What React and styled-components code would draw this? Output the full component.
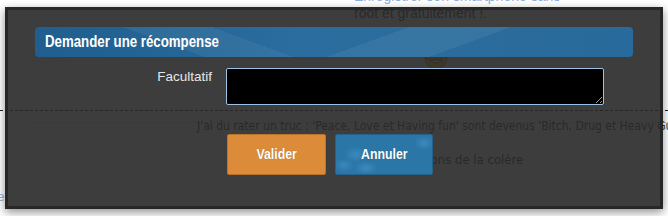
import React from 'react';
import styled, { createGlobalStyle } from 'styled-components';

const GlobalStyle = createGlobalStyle`
  html, body {
    margin: 0;
    padding: 0;
    background: #ffffff;
    overflow: hidden;
  }
  #root {
    height: 216px;
  }
`;

const Page = styled.div`
  position: relative;
  width: 668px;
  height: 216px;
  overflow: hidden;
  font-family: 'Liberation Sans', Arial, sans-serif;
  color: #333;
`;

const Blurb = styled.div`
  margin: -12px 0 0 354px;
  font-size: 14px;
  line-height: 17px;
`;

const BlurbLink = styled.div`
  color: #8fb0dc;
`;

const Smiley = styled.svg`
  display: block;
  margin: 24px 0 0 424px;
`;

const Rule = styled.div`
  margin: ${(p) => p.$top}px 0 0 ${(p) => p.$left}px;
  border-top: ${(p) => p.$size}px ${(p) => p.$kind} ${(p) => p.$color};
`;

const Quote = styled.div`
  margin: -4px 0 0 197px;
  white-space: nowrap;
  font-family: 'DejaVu Sans Condensed', 'DejaVu Sans', sans-serif;
  font-size: 12px;
  line-height: 15px;
`;

const Reason = styled.div`
  margin: 18px 0 0 386px;
  white-space: nowrap;
  font-family: 'DejaVu Sans Condensed', 'DejaVu Sans', sans-serif;
  font-size: 13px;
  line-height: 16px;
`;

const SideLink = styled.div`
  margin: 21px 0 0 -41px;
  font-size: 13px;
  color: #8fb0dc;
`;

const Modal = styled.div`
  position: absolute;
  left: 5px;
  top: 7px;
  width: 598px;
  height: 179px;
  border: 3px solid rgba(38, 38, 38, 0.97);
  background: rgba(40, 40, 40, 0.9);
  box-shadow: 0 3px 9px rgba(0, 0, 0, 0.45);
  padding: 17px 27px 0 27px;
  display: flex;
  flex-direction: column;
  font-family: 'Liberation Sans', Arial, sans-serif;
`;

const TitleBar = styled.div`
  height: 30px;
  border-radius: 4px;
  display: flex;
  align-items: center;
  padding: 0 10px;
  background:
    linear-gradient(200deg, transparent 62%, rgba(255, 255, 255, 0.05) 62%, rgba(255, 255, 255, 0.05) 75%, transparent 75%),
    linear-gradient(160deg, transparent 55%, rgba(255, 255, 255, 0.06) 55%, rgba(255, 255, 255, 0.06) 70%, transparent 70%),
    linear-gradient(to right, #1f5e8f, #2a6d9e 45%, #2b6c9c 70%, #286a9b);
`;

const Title = styled.h2`
  margin: 0;
  font-family: 'Liberation Sans', Arial, sans-serif;
  font-weight: bold;
  font-size: 17px;
  color: #ffffff;
  white-space: nowrap;
  transform: scaleX(0.78);
  transform-origin: left center;
`;

const FieldRow = styled.div`
  display: grid;
  grid-template-columns: 177px 378px;
  column-gap: 14px;
  margin-top: 11px;
`;

const Label = styled.label`
  text-align: right;
  font-size: 13.5px;
  line-height: 16px;
  color: #e6e6e6;
  padding-top: 1px;
`;

const TextArea = styled.textarea`
  display: block;
  box-sizing: border-box;
  width: 378px;
  height: 37px;
  margin: 0;
  background: #000000;
  border: 1px solid #9cc3e4;
  border-radius: 2px;
  color: #fff;
  resize: both;
  outline: none;
`;

const Actions = styled.div`
  display: flex;
  gap: 9px;
  margin: 29px 0 0 192px;
`;

const Button = styled.button`
  box-sizing: border-box;
  width: ${(p) => p.$width}px;
  height: 41px;
  border: 1px solid ${(p) => (p.$primary ? '#b8732c' : '#24628c')};
  border-radius: 2px;
  padding: 0 0 2px 0;
  background: ${(p) =>
    p.$primary
      ? '#dc8c38'
      : `radial-gradient(ellipse 12px 8px at 20px 50%, rgba(80, 160, 220, 0.45), transparent),
         radial-gradient(ellipse 12px 7px at 30px 33px, rgba(80, 160, 220, 0.45), transparent),
         radial-gradient(ellipse 10px 7px at 88px 8px, rgba(80, 160, 220, 0.45), transparent),
         radial-gradient(ellipse 10px 7px at 8px 30px, rgba(80, 160, 220, 0.4), transparent),
         #2a76a6`};
`;

const ButtonText = styled.span`
  display: inline-block;
  font-family: 'Liberation Sans', Arial, sans-serif;
  font-weight: bold;
  font-size: 15px;
  color: #ffffff;
  text-shadow: 0 0 1px rgba(0, 0, 0, 0.3);
  transform: scaleX(0.82);
`;

export default function App() {
  return (
    <>
      <GlobalStyle />
      <Page>
        <Blurb>
          <BlurbLink>Enregistrer son smartphone sans</BlurbLink>
          <div>root et gratuitement !.</div>
        </Blurb>
        <Smiley width="24" height="24" viewBox="0 0 24 24">
          <circle cx="12" cy="12" r="11" fill="#f2c230" stroke="#b98a14" />
          <rect x="5" y="7" width="6" height="4" rx="1" fill="#333" />
          <rect x="13" y="7" width="6" height="4" rx="1" fill="#333" />
          <path d="M6 14 Q12 20 18 14 Z" fill="#fff" stroke="#8a5a10" />
        </Smiley>
        <Rule $top={40} $left={0} $size={1} $kind="dashed" $color="#222" />
        <Rule $top={11} $left={30} $size={1} $kind="dotted" $color="#8fd0ff" />
        <Quote>
          J'ai du rater un truc : 'Peace, Love et Having fun' sont devenus 'Bitch, Drug et Heavy Gun'
        </Quote>
        <Reason>Les raisons de la colère</Reason>
        <SideLink>Partager</SideLink>

        <Modal>
          <TitleBar>
            <Title>Demander une récompense</Title>
          </TitleBar>
          <FieldRow>
            <Label htmlFor="facultatif">Facultatif</Label>
            <TextArea id="facultatif" />
          </FieldRow>
          <Actions>
            <Button $primary $width={99}>
              <ButtonText>Valider</ButtonText>
            </Button>
            <Button $width={98}>
              <ButtonText>Annuler</ButtonText>
            </Button>
          </Actions>
        </Modal>
      </Page>
    </>
  );
}
